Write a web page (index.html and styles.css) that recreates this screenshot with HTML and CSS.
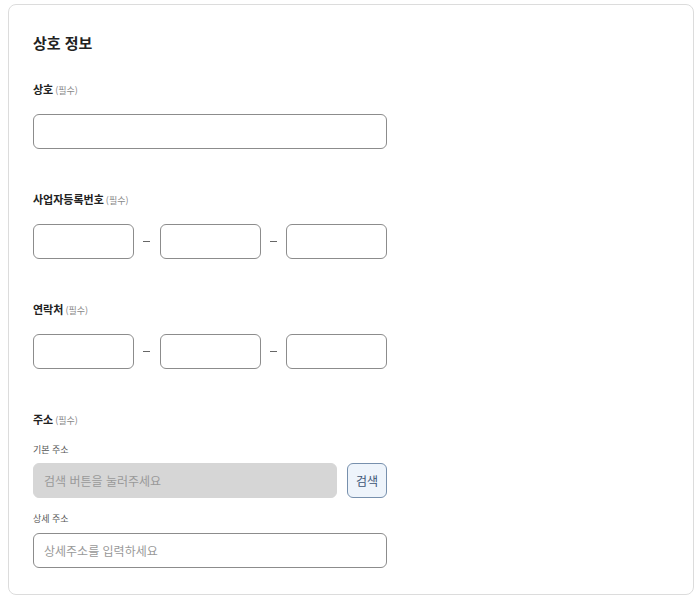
FILE: index.html
```html
<!DOCTYPE html>
<html lang="ko">
<head>
    <meta charset="UTF-8">
    <meta name="viewport" content="width=device-width, initial-scale=1.0">
    <title>상호 정보</title>
    <link rel="stylesheet" href="styles.css">
</head>
<body>
    <!-- 상호 정보 카드 -->
    <div class="info-card">
        <h2>상호 정보</h2>

        <div class="field first">
            <label>상호<span class="required">(필수)</span></label>
            <input type="text" class="text-input full">
        </div>

        <div class="field">
            <label>사업자등록번호<span class="required">(필수)</span></label>
            <div class="split-row">
                <input type="text" class="text-input">
                <span class="dash"></span>
                <input type="text" class="text-input">
                <span class="dash"></span>
                <input type="text" class="text-input">
            </div>
        </div>

        <div class="field">
            <label>연락처<span class="required">(필수)</span></label>
            <div class="split-row">
                <input type="text" class="text-input">
                <span class="dash"></span>
                <input type="text" class="text-input">
                <span class="dash"></span>
                <input type="text" class="text-input">
            </div>
        </div>

        <div class="field">
            <label>주소<span class="required">(필수)</span></label>
            <div class="sub-label">기본 주소</div>
            <div class="address-row">
                <input type="text" class="text-input readonly" placeholder="검색 버튼을 눌러주세요" readonly>
                <button type="button" class="search-btn">검색</button>
            </div>
            <div class="sub-label detail">상세 주소</div>
            <input type="text" class="text-input full" placeholder="상세주소를 입력하세요">
        </div>
    </div>
</body>
</html>
```

FILE: styles.css
```css
body{
    margin: 4px 6px 6px 8px;
    background-color: #fff;
    font-family: "Noto Sans CJK KR", "Noto Sans", sans-serif;
    color: #222;
}
.info-card{
    height: 540px;
    border: 1px solid #dcdcdc;
    border-radius: 8px;
    padding: 24px 24px 25px 24px;
}
h2{
    margin: 0;
    font-size: 15px;
    line-height: 28px;
    font-weight: 700;
}
.field{
    margin-top: 40px;
    width: 354px;
}
.field.first{
    margin-top: 22px;
}
.field > label{
    display: block;
    height: 20px;
    font-size: 11px;
    line-height: 20px;
    font-weight: 700;
    margin-bottom: 15px;
}
.required{
    margin-left: 2px;
    font-size: 9px;
    line-height: 1;
    font-weight: 400;
    color: #888;
}
.text-input{
    box-sizing: border-box;
    height: 35px;
    width: 101px;
    border: 1px solid #8c8c8c;
    border-radius: 6px;
    padding: 0 10px;
    font-family: inherit;
    font-size: 12px;
    color: #333;
    background: #fff;
}
.text-input::placeholder{
    color: #999;
}
.text-input.full{
    width: 354px;
    display: block;
}
.split-row{
    display: flex;
    align-items: center;
}
.dash{
    width: 26px;
    display: flex;
    justify-content: center;
}
.dash::before{
    content: "";
    width: 7px;
    height: 1px;
    background-color: #666;
}
.sub-label{
    height: 16px;
    font-size: 9px;
    line-height: 16px;
    color: #555;
    margin-top: -2px;
    margin-bottom: 5px;
}
.sub-label.detail{
    margin-top: 13px;
    margin-bottom: 6px;
}
.address-row{
    display: flex;
    gap: 10px;
}
.text-input.readonly{
    flex: 1;
    background-color: #d6d6d6;
    border-color: #d6d6d6;
}
.search-btn{
    box-sizing: border-box;
    width: 40px;
    height: 35px;
    border: 1px solid #7790ad;
    border-radius: 6px;
    background-color: #eef4fb;
    color: #3d5675;
    font-family: inherit;
    font-size: 12px;
    padding: 0;
}
```
